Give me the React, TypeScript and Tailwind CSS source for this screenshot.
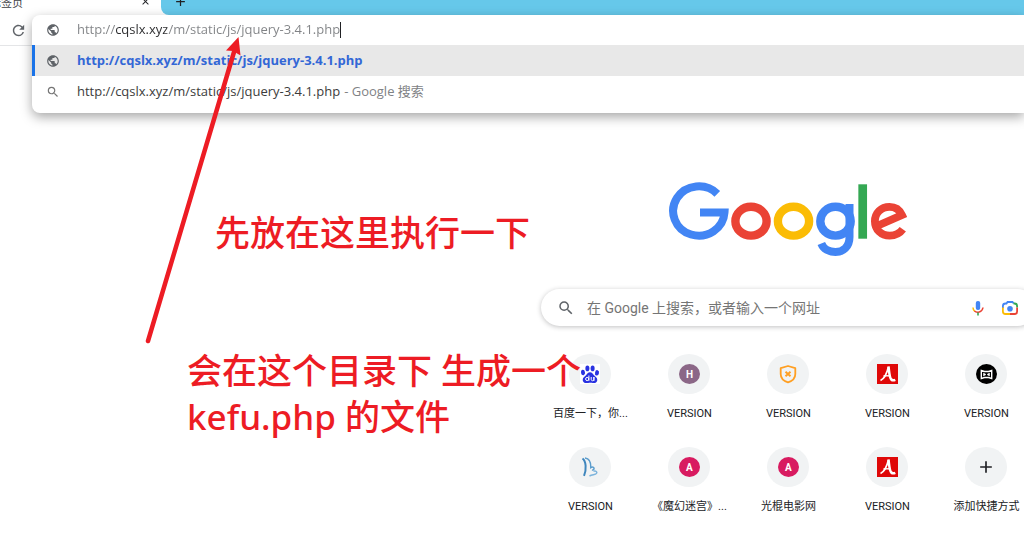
import type { ReactNode } from "react";
import { MdAdd, MdClose, MdPublic, MdRefresh, MdSearch } from "react-icons/md";

const url = "http://cqslx.xyz/m/static/js/jquery-3.4.1.php";

const BaiduIcon = () => (
  <svg viewBox="0 0 20 20" className="h-5 w-5" aria-hidden="true">
    <rect width="20" height="20" fill="#fff" />
    <g fill="#2932e1">
      <ellipse cx="3" cy="8.5" rx="2" ry="2.7" transform="rotate(-12 3 8.5)" />
      <ellipse cx="7.4" cy="4.4" rx="2" ry="2.8" />
      <ellipse cx="12.6" cy="4.4" rx="2" ry="2.8" />
      <ellipse cx="17" cy="8.8" rx="2" ry="2.7" transform="rotate(12 17 8.8)" />
      <path d="M10 8.3c2 0 2.900 1.600 4 3 1.300 1.500 3.300 2.300 3.300 4.600 0 2.200-1.800 3.200-3.800 3.100-1.500-.1-2.200-.3-3.500-.3s-2 .3-3.500.3c-2 .1-3.800-.9-3.800-3.100 0-2.300 2-3.100 3.300-4.600 1.100-1.400 2-3 4-3z" />
    </g>
    <g fill="none" stroke="#fff" strokeWidth="1">
      <circle cx="7.200" cy="15" r="1.600" />
      <path d="M8.900 11.500v5.300M11.200 13v2.400c0 1.800 2.700 1.800 2.700 0V13v4" />
    </g>
  </svg>
);

const ShieldIcon = () => (
  <svg viewBox="0 0 20 20" className="h-5 w-5" fill="none" stroke="#ff9f22" aria-hidden="true">
    <path d="M10 2 17.300 4.200V10c0 4-3 7-7.300 8.300C5.700 17 2.700 14 2.700 10V4.200z" strokeWidth="1.800" strokeLinejoin="round" />
    <path d="m7.500 7.800 5 4.500m0-4.500-5 4.500" strokeWidth="1.900" />
  </svg>
);

const RedIcon = () => (
  <svg viewBox="0 0 21 20" className="h-5 w-[21px]" fill="none" stroke="#fff" aria-hidden="true">
    <rect width="21" height="20" fill="#df0808" stroke="none" />
    <path d="M3.500 16.500C7 15 10 9 11.500 2.800" strokeWidth="1.700" />
    <path d="M11.500 2.500c.7 5 .8 11 2.800 13 1 1 2.500 1 4 .3" strokeWidth="2.500" />
    <path d="M6.500 11.800h6.500" strokeWidth="1.400" />
  </svg>
);

const BowIcon = () => (
  <svg viewBox="0 0 21 20" className="h-5 w-[21px]" fill="none" stroke="#fff" aria-hidden="true">
    <ellipse cx="10.500" cy="10" rx="10.500" ry="10" fill="#000" stroke="none" />
    <path d="M5.300 6.500 8.500 7.500h4l3.200-1v8l-3.200-1h-4l-3.200 1z" strokeWidth="1.400" />
    <path d="m7.500 9 2.500 1.500L7.500 12zM13.500 9 11 10.500l2.500 1.500z" fill="#fff" strokeWidth=".5" />
  </svg>
);

const FeatherIcon = () => (
  <svg viewBox="0 0 20 20" className="h-5 w-5" fill="none" aria-hidden="true">
    <path d="M2.500 1.500C6 4 6.800 12 4 18.800" stroke="#3f86bd" strokeWidth="2" />
    <path d="M5 1C9 1.500 11 5 10.800 10.500c2-1.300 4 .2 3 1.800-.4.700-1.200.8-1.800.6" stroke="#5b9dcd" strokeWidth="1.500" />
    <path d="M13.500 14.200c2.500-.7 4 .7 3 2.200-1.200 1.600-4 1-7 2.600" stroke="#7db4dc" strokeWidth="1.500" />
  </svg>
);

const Letter = ({ children, className }: { children: ReactNode; className: string }) => (
  <span
    className={`flex h-5 w-[21px] items-center justify-center rounded-[50%] font-[Roboto,sans-serif] text-[10px] font-bold text-white ${className}`}
  >
    {children}
  </span>
);

const shortcuts = [
  { title: "百度一下，你...", icon: <BaiduIcon /> },
  { title: "VERSION", icon: <Letter className="bg-[#8b6787]">H</Letter> },
  { title: "VERSION", icon: <ShieldIcon /> },
  { title: "VERSION", icon: <RedIcon /> },
  { title: "VERSION", icon: <BowIcon /> },
  { title: "VERSION", icon: <FeatherIcon /> },
  { title: "《魔幻迷宫》...", icon: <Letter className="bg-[#d81b60]">A</Letter> },
  { title: "光棍电影网", icon: <Letter className="bg-[#d81b60]">A</Letter> },
  { title: "VERSION", icon: <RedIcon /> },
  { title: "添加快捷方式", icon: <MdAdd size={20} className="text-[#202124]" /> },
];

const GoogleLogo = () => (
  <svg viewBox="668 182 240 75" className="h-[75px] w-60" fill="none" strokeWidth="8.400" role="img" aria-label="Google">
    <path d="M717.300 193.800A25.700 24.700 0 1 0 724.500 212.500H700" stroke="#4285f4" strokeWidth="8" />
    <ellipse cx="751" cy="221.200" rx="15.600" ry="14.400" stroke="#ea4335" />
    <ellipse cx="793.500" cy="221.200" rx="15.600" ry="14.400" stroke="#fbbc05" />
    <ellipse cx="835.500" cy="221.200" rx="15.200" ry="14.400" stroke="#4285f4" />
    <path d="M849.500 204V237C849.500 247 843 252 835.500 252C829 252 823.500 249 821.300 243.500" stroke="#4285f4" strokeWidth="8" />
    <path d="M862.700 184.300V238.700" stroke="#34a853" strokeWidth="8.700" />
    <path d="M877 226 902 215C899.500 209.500 895 206.800 889.500 206.800C881 206.800 874.900 213 874.900 221.200C874.900 229.500 881 235.600 889.700 235.600C895.500 235.600 899.800 233.400 902.800 229.300" stroke="#ea4335" strokeWidth="7.800" />
  </svg>
);

const MicIcon = () => (
  <svg viewBox="0 0 12 16" className="h-4 w-3" fill="none" aria-hidden="true">
    <rect x="3.800" y="1" width="4.400" height="9" rx="2" fill="#4285f4" />
    <path d="M1 7.500c0 1.800.7 3 1.800 3.800" stroke="#fbbc05" strokeWidth="1.500" />
    <path d="M2.500 11c2 2 7.800 1.700 8.500-3.500" stroke="#ea4335" strokeWidth="1.500" />
    <path d="M6 12.500V15.500" stroke="#34a853" strokeWidth="1.600" />
  </svg>
);

const CameraIcon = () => (
  <svg viewBox="0 0 18 16" className="h-4 w-[18px]" fill="none" strokeWidth="1.800" aria-hidden="true">
    <path d="M1.900 8V6c0-1.600 1-2.500 2.600-2.500h1L6.500 2h5l1.200 1.500" stroke="#4285f4" />
    <path d="M12.500 3.500h1c1.600 0 2.600.9 2.600 2.500v1.500" stroke="#34a853" />
    <path d="M16.100 7.500v4c0 1.500-1 2.500-2.600 2.500H9" stroke="#ea4335" />
    <path d="M1.900 7.500v4C1.900 13 2.900 14 4.500 14H9" stroke="#fbbc05" />
    <circle cx="9" cy="8.700" r="2.800" fill="#4285f4" />
  </svg>
);

const Omnibox = () => (
  <div className="absolute top-0 right-0 left-8 rounded-l-lg bg-white pb-1.5 font-['Open_Sans','Noto_Sans_CJK_SC',sans-serif] text-[13px] text-[#3c3c3c] shadow-[0_4px_12px_rgba(0,0,0,0.35)]">
    <label className="flex h-[30px] items-center pl-3.5">
      <MdPublic size={14} className="mr-[17px] shrink-0 text-[#5f6368]" />
      <input
        aria-label="地址"
        defaultValue={url}
        className="field-sizing-content bg-[linear-gradient(90deg,#808285_38px,#2b2c2e_38px,#2b2c2e_90px,#808285_90px)] bg-clip-text text-transparent outline-none"
      />
      <span className="h-4 w-px bg-[#202124]" />
    </label>
    <button type="button" className="flex h-[31px] w-full items-center border-l-3 border-[#1a73e8] bg-[#e8e8e8] pl-[11px] font-bold text-[#3367d6]">
      <MdPublic size={14} className="mr-[17px] shrink-0 text-[#5f6368]" />
      {url}
    </button>
    <button type="button" className="flex h-[31px] w-full items-center pl-3.5">
      <MdSearch size={14} className="mr-[17px] shrink-0 text-[#757575]" />
      {url}
      <span className="ml-1 text-[#808285]">- Google 搜索</span>
    </button>
  </div>
);

const Annotations = () => (
  <div className="pointer-events-none absolute inset-0 z-20 font-['Noto_Sans','Noto_Sans_CJK_SC',sans-serif] text-[35px] leading-[46px] font-medium whitespace-nowrap text-[#ed1c24]">
    <svg viewBox="0 0 110 320" className="absolute top-[30px] left-[140px] h-80 w-[110px]" aria-hidden="true">
      <path d="M8 311 94 22" stroke="#ed1c24" strokeWidth="4.500" strokeLinecap="round" />
      <path d="M98.500 7 86 20.500 93 21 100.500 25.500z" fill="#ed1c24" />
    </svg>
    <p className="absolute top-[210px] left-[215px]">先放在这里执行一下</p>
    <p className="absolute top-[348px] left-[187px]">
      会在这个目录下 生成一个
      <br />
      kefu.php 的文件
    </p>
  </div>
);

export default function App() {
  return (
    <div className="relative min-h-screen overflow-hidden bg-white">
      {/* Tab strip */}
      <div className="flex h-[15px] overflow-hidden bg-white">
        <div className="flex w-[161px] shrink-0 items-start justify-between pr-2.5">
          <span className="-mt-1.5 -ml-2.5 font-['Noto_Sans_CJK_SC',sans-serif] text-[11px] leading-4 text-[#3c4043]">
            标签页
          </span>
          <button type="button" aria-label="关闭" className="-mt-1 text-[#202124]">
            <MdClose size={11} />
          </button>
        </div>
        <div className="flex flex-1 items-start rounded-bl-lg bg-[#66c8ea] pl-3">
          <button type="button" aria-label="新标签页" className="-mt-1.5 text-[#202124]">
            <MdAdd size={15} />
          </button>
        </div>
      </div>

      {/* Toolbar */}
      <header className="relative z-10 h-[31px] border-b border-[#e4e5e7]">
        <button type="button" aria-label="重新加载" className="flex h-[30px] items-center pl-2.5 text-[#5f6368]">
          <MdRefresh size={17} />
        </button>
        <Omnibox />
      </header>

      {/* The page is wider than the visible part of the window */}
      <main className="flex w-[154%] flex-col items-center pt-[136px]">
        <GoogleLogo />
        <label className="mt-8 flex h-[37px] w-[495px] items-center rounded-full bg-white pr-[17px] pl-4 shadow-[0_1px_5px_rgba(32,33,36,0.28)]">
          <MdSearch size={18} className="mr-3 shrink-0 text-[#5f6368]" />
          <input
            placeholder="在 Google 上搜索，或者输入一个网址"
            aria-label="搜索"
            className="flex-1 font-[Roboto,'Noto_Sans_CJK_SC',sans-serif] text-sm text-[#202124] outline-none placeholder:text-[#757575]"
          />
          <button type="button" aria-label="语音搜索" className="mr-[17px]">
            <MicIcon />
          </button>
          <button type="button" aria-label="图片搜索">
            <CameraIcon />
          </button>
        </label>
        <nav className="mt-7 grid w-[495px] grid-cols-5 gap-y-[31px]">
          {shortcuts.map((item, index) => (
            <a key={index} href="#" className="flex flex-col items-center gap-2.5">
              <span className="flex h-10 w-[42px] items-center justify-center rounded-[50%] bg-[#f1f3f4]">
                {item.icon}
              </span>
              <span className="h-3 font-[Roboto,'Noto_Sans_CJK_SC',sans-serif] text-[11px] leading-5 whitespace-nowrap text-[#202124]">
                {item.title}
              </span>
            </a>
          ))}
        </nav>
      </main>

      <Annotations />
    </div>
  );
}
